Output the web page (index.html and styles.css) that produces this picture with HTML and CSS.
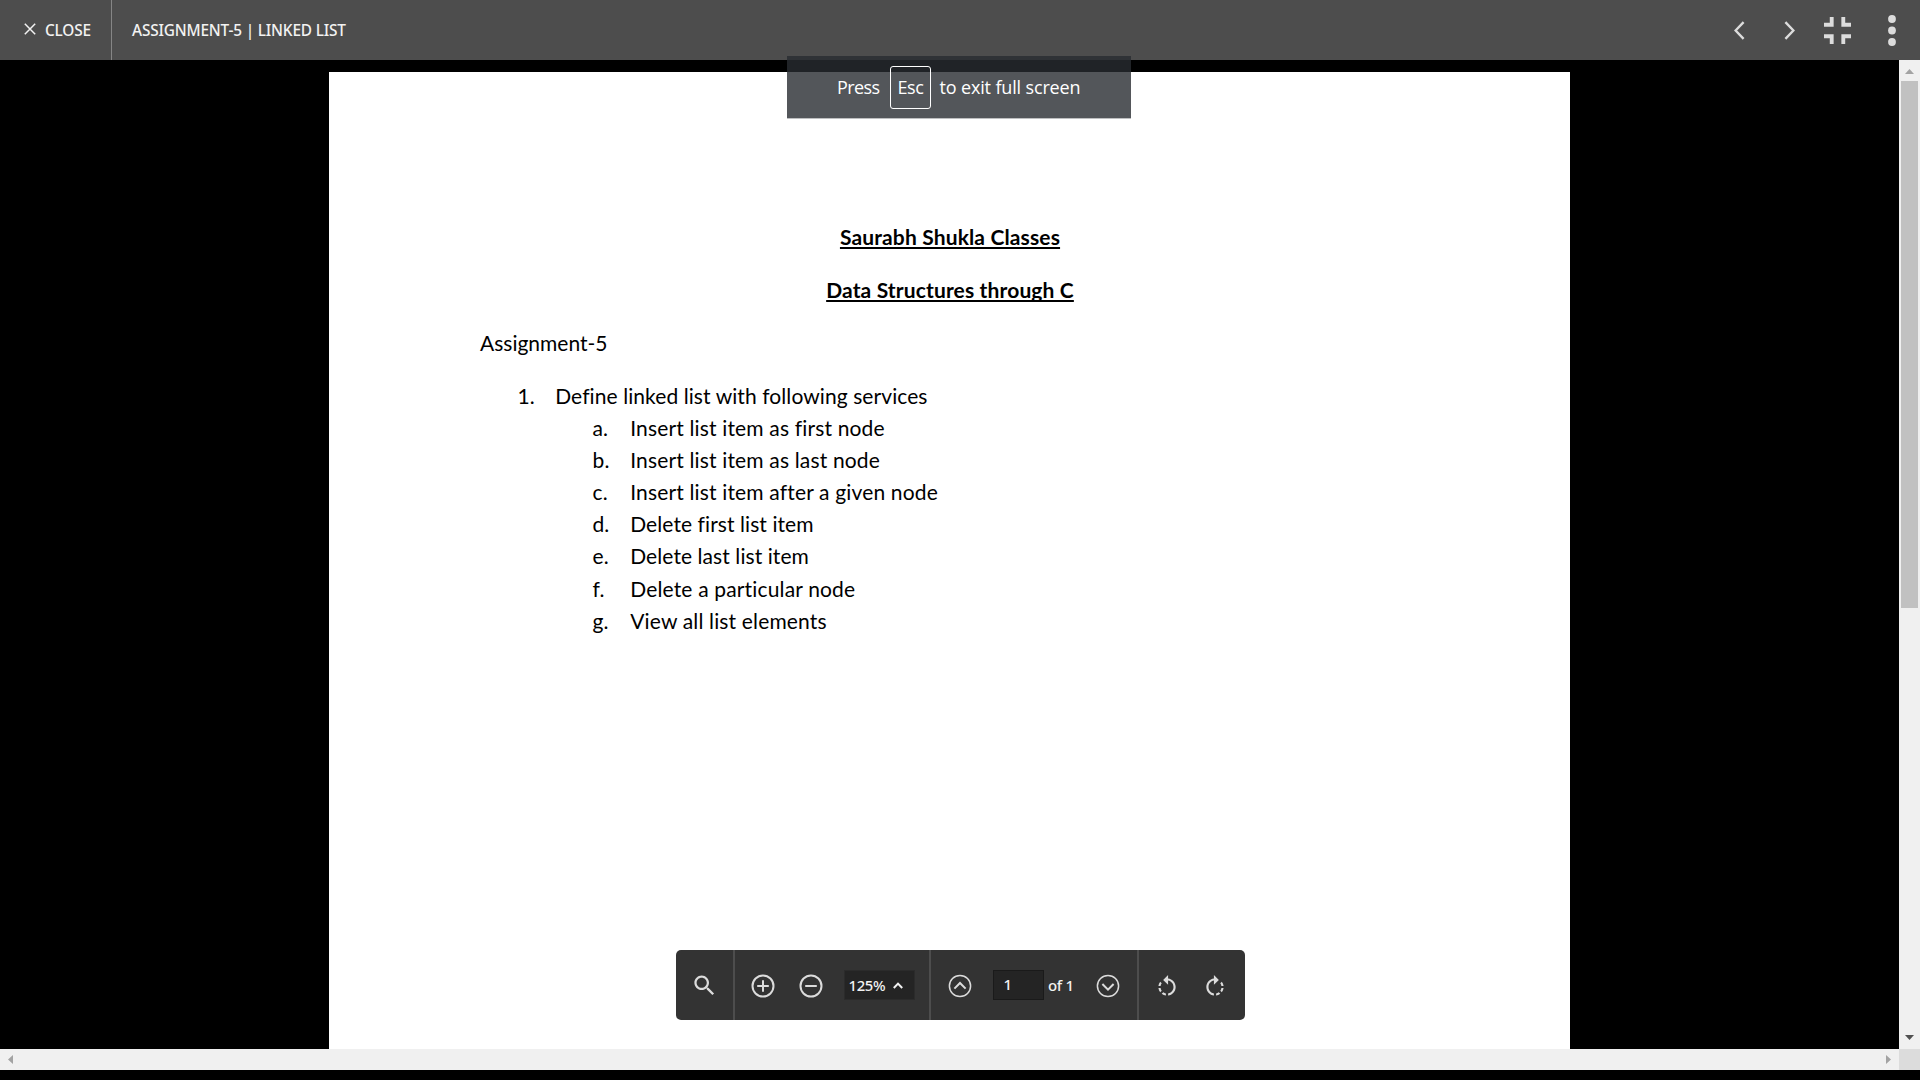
FILE: index.html
```html
<!DOCTYPE html>
<html lang="en">
<head>
<meta charset="utf-8">
<title>Assignment-5 | Linked List</title>
<link rel="stylesheet" href="styles.css">
</head>
<body>
<div class="app">
  <header class="topbar">
    <button class="close">
      <svg class="close-icon" viewBox="0 0 12 12"><path d="M.8.8l10.400 10.400M11.200.8L.8 11.200"/></svg>
      <span>CLOSE</span>
    </button>
    <h1 class="file-name">ASSIGNMENT-5 | LINKED LIST</h1>
    <nav class="actions">
      <svg class="chevron" viewBox="0 0 11 19"><path d="M9.600 1.200L1.600 9.500l8 8.300"/></svg>
      <svg class="chevron next" viewBox="0 0 11 19"><path d="M1.400 1.200l8 8.300-8 8.300"/></svg>
      <svg class="shrink" viewBox="5 5 14 14"><path d="M5 16h3v3h2v-5H5v2zm3-8H5v2h5V5H8v3zm6 11h2v-3h3v-2h-5v5zm2-11V5h-2v5h5V8h-3z"/></svg>
      <svg class="more" viewBox="0 0 8 31"><circle cx="4" cy="4" r="3.900"/><circle cx="4" cy="15.500" r="3.900"/><circle cx="4" cy="27" r="3.900"/></svg>
    </nav>
  </header>

  <main class="viewer">
    <div class="canvas">
      <article class="page">
        <h2 class="title title-a"><span>Saurabh Shukla Classes</span></h2>
        <h2 class="title title-b"><span>Data Structures through C</span></h2>
        <p class="label">Assignment-5</p>
        <div class="list">
          <div class="row"><span class="mark">1.</span><span>Define linked list with following services</span></div>
          <div class="sublist">
            <div class="row"><span class="mark">a.</span><span>Insert list item as first node</span></div>
            <div class="row"><span class="mark">b.</span><span>Insert list item as last node</span></div>
            <div class="row"><span class="mark">c.</span><span>Insert list item after a given node</span></div>
            <div class="row tight"><span class="mark">d.</span><span>Delete first list item</span></div>
            <div class="row tight"><span class="mark">e.</span><span>Delete last list item</span></div>
            <div class="row"><span class="mark">f.</span><span>Delete a particular node</span></div>
            <div class="row"><span class="mark">g.</span><span>View all list elements</span></div>
          </div>
        </div>
      </article>
    </div>
    <div class="vscroll">
      <svg class="arrow-v" viewBox="0 0 9 5"><path d="M0 5L4.500 0 9 5z"/></svg>
      <div class="thumb"></div>
      <svg class="arrow-v active" viewBox="0 0 9 5"><path d="M0 0h9L4.500 5z"/></svg>
    </div>
    <div class="hscroll">
      <svg class="arrow-h" viewBox="0 0 5 9"><path d="M5 0v9L0 4.500z"/></svg>
      <svg class="arrow-h" viewBox="0 0 5 9"><path d="M0 0v9l5-4.500z"/></svg>
    </div>
    <div class="corner"></div>
  </main>

  <div class="toast">
    <span class="press">Press</span>
    <kbd>Esc</kbd>
    <span class="rest">to exit full screen</span>
  </div>

  <div class="toolbar">
    <div class="group search">
      <svg width="27" height="27" viewBox="0 0 24 24"><path class="solid" d="M15.500 14h-.79l-.28-.27C15.410 12.590 16 11.110 16 9.500 16 5.910 13.090 3 9.500 3S3 5.910 3 9.500 5.910 16 9.500 16c1.610 0 3.090-.59 4.230-1.570l.27.28v.79l5 4.990L20.490 19l-4.990-5zm-6 0C7.010 14 5 11.990 5 9.500S7.010 5 9.500 5 14 7.010 14 9.500 11.990 14 9.500 14z"/></svg>
    </div>
    <div class="group zoom">
      <svg width="24" height="24" viewBox="0 0 24 24"><circle cx="12" cy="12" r="10.500"/><path d="M12 6.200v11.600M6.200 12h11.600"/></svg>
      <svg width="24" height="24" viewBox="0 0 24 24"><circle cx="12" cy="12" r="10.500"/><path d="M6.200 12h11.600"/></svg>
      <div class="zoom-level"><span>125%</span><svg width="10" height="7" viewBox="0 0 10 7"><path d="M.8 6L5 1.600 9.200 6"/></svg></div>
    </div>
    <div class="group paging">
      <svg width="24" height="24" viewBox="0 0 24 24"><circle class="thin" cx="12" cy="12" r="10.600"/><path d="M6.400 14.600L12 9l5.600 5.600"/></svg>
      <div class="page-input">1</div>
      <span class="page-total">of 1</span>
      <svg width="24" height="24" viewBox="0 0 24 24"><circle class="thin" cx="12" cy="12" r="10.600"/><path d="M6.400 10l5.600 5.600L17.600 10"/></svg>
    </div>
    <div class="group rotate">
      <svg width="26" height="26" viewBox="0 0 24 24"><path class="solid" d="M7.110 8.530L5.700 7.110C4.800 8.270 4.240 9.610 4.070 11h2.020c.14-.87.49-1.720 1.020-2.470zM6.090 13H4.070c.17 1.390.72 2.730 1.620 3.890l1.410-1.420c-.52-.75-.87-1.590-1.010-2.470zm1.010 5.320c1.160.9 2.510 1.440 3.900 1.610V17.900c-.87-.15-1.710-.49-2.460-1.030L7.100 18.320zM13 4.070V1L8.450 5.550 13 10V6.090c2.840.48 5 2.940 5 5.910s-2.160 5.430-5 5.910v2.020c3.950-.49 7-3.850 7-7.930s-3.050-7.440-7-7.930z"/></svg>
      <svg class="flip" width="26" height="26" viewBox="0 0 24 24"><path class="solid" d="M7.110 8.530L5.700 7.110C4.800 8.270 4.240 9.610 4.070 11h2.020c.14-.87.49-1.720 1.020-2.470zM6.090 13H4.070c.17 1.390.72 2.730 1.620 3.890l1.410-1.420c-.52-.75-.87-1.590-1.010-2.470zm1.010 5.320c1.160.9 2.510 1.440 3.900 1.610V17.900c-.87-.15-1.710-.49-2.460-1.030L7.100 18.320zM13 4.070V1L8.450 5.550 13 10V6.090c2.840.48 5 2.940 5 5.910s-2.160 5.430-5 5.910v2.020c3.950-.49 7-3.850 7-7.930s-3.050-7.440-7-7.930z"/></svg>
    </div>
  </div>
</div>
</body>
</html>
```
FILE: styles.css
```css
* { box-sizing: border-box; margin: 0; padding: 0; }
body { background: #000; overflow: hidden; font-family: "Noto Sans", "Open Sans", sans-serif; }
svg { display: block; flex: none; }
.app { position: relative; display: flex; flex-direction: column; width: 1920px; height: 1080px; padding-bottom: 10px; }

/* Top bar */
.topbar { display: flex; height: 60px; flex: none; background: #4d4d4d; color: #f2f2f2; }
.close { display: flex; align-items: center; width: 112px; padding-left: 24px; gap: 9px; border: 0; border-right: 1px solid #858585; background: none; color: inherit; font: 500 15.400px/60px "Noto Sans", sans-serif; letter-spacing: -.2px; }
.close-icon { width: 12px; height: 12px; margin-top: -2px; fill: none; stroke: #f2f2f2; stroke-width: 1.500; }
.close span, .file-name { padding-top: 1px; }
.file-name { padding-left: 20px; font-size: 15.400px; font-weight: 500; line-height: 60px; letter-spacing: -.18px; }
.actions { display: flex; align-items: center; margin-left: auto; padding: 1px 24px 0 0; fill: #dcdcdc; }
.chevron { width: 11px; height: 19px; fill: none; stroke: #dcdcdc; stroke-width: 2.400; }
.chevron.next { margin-left: 38.500px; }
.shrink { width: 27px; height: 27px; margin-left: 29px; }
.more { width: 8px; height: 31px; margin-left: 37.500px; }

/* Document viewer */
.viewer { display: grid; grid-template: 989px 21px / 1899px 21px; }
.canvas { padding: 12px 0 0 329px; overflow: hidden; }
.page { display: flex; flex-direction: column; gap: 21px; width: 1241px; height: 977px; padding: 148.400px 0 0 151px; background: #fff; color: #000; font: 21px/32.200px Lato, "Open Sans", sans-serif; letter-spacing: .08px; font-variant-ligatures: none; }
.title { margin-left: -150px; text-align: center; font-size: 21px; font-weight: 700; letter-spacing: .14px; }
.title-a { margin: .600px 0 -.600px -150px; }
.title span { text-decoration: underline; text-decoration-thickness: 2px; text-underline-offset: 2px; text-decoration-skip-ink: none; }
.label { letter-spacing: 0; }
.list { padding-left: 37.500px; }
.sublist { padding-left: 75px; letter-spacing: .16px; }
.row { display: flex; }
.row:nth-child(3) { margin: -.600px 0 .600px; }
.row.tight { margin: -.600px 0 .600px; letter-spacing: .08px; }
.mark { width: 37.700px; }

/* Scrollbars */
.vscroll { display: flex; flex-direction: column; align-items: center; padding: 9px 0; background: #f0f0f0; }
.thumb { width: 17px; height: 527px; margin: 7px 0 auto; background: #c1c1c1; }
.arrow-v { width: 9px; height: 5px; fill: #a3a3a3; }
.arrow-v.active { fill: #505050; }
.hscroll { display: flex; justify-content: space-between; align-items: center; padding: 0 8px; background: #f0f0f0; }
.arrow-h { width: 5px; height: 9px; fill: #a3a3a3; }
.corner { background: #dcdcdc; }

/* Full-screen notice */
.toast { position: absolute; left: 787px; top: 56px; display: flex; width: 344px; height: 62px; padding: 10px 0 0 50px; background: rgba(40, 44, 49, .8); box-shadow: 0 1px rgba(40, 44, 49, .3); color: #fff; font: 18px/42px "Open Sans", sans-serif; white-space: nowrap; }
.press { width: 53px; letter-spacing: -.6px; }
.toast kbd { width: 41px; height: 43px; border: 1px solid #fff; border-radius: 3px; font: inherit; line-height: 40px; text-align: center; letter-spacing: -.4px; }
.rest { margin-left: 8.500px; letter-spacing: -.15px; }

/* Floating toolbar */
.toolbar { position: absolute; left: 675.500px; top: 950px; display: flex; width: 569px; height: 70px; border-radius: 5px; background: #333; color: #f2f2f2; }
.toolbar svg { fill: none; stroke: #dcdcdc; stroke-width: 2; }
.toolbar .solid { fill: #dcdcdc; stroke: none; }
.toolbar .thin { stroke-width: 1.500; }
.group { display: flex; align-items: center; padding-top: 2px; border-right: 2px solid #4d4d4d; }
.group:last-child { border: 0; }
.search { width: 59px; padding: 0 0 0 15px; }
.zoom { width: 196px; padding-left: 16.500px; gap: 23.500px; }
.zoom-level { display: flex; align-items: center; gap: 8px; width: 71px; height: 30px; margin: -2px 0 0 -2.500px; padding-left: 4px; border: 1px solid #2b2b2b; background: #242424; font-size: 14.800px; font-weight: 500; letter-spacing: -.3px; }
.toolbar .zoom-level svg { stroke: #f2f2f2; }
.paging { width: 208px; padding-left: 17px; font-size: 15px; font-weight: 500; }
.page-input { width: 51px; height: 30px; margin: -2px 0 0 21px; padding-left: 10px; border: 1px solid #1a1a1a; background: #242424; line-height: 26px; }
.page-total { width: 43px; margin: -3px 5px 0 4.500px; letter-spacing: -.3px; }
.rotate { padding: 3px 0 0 15px; gap: 22px; }
.flip { transform: scaleX(-1); }
```
